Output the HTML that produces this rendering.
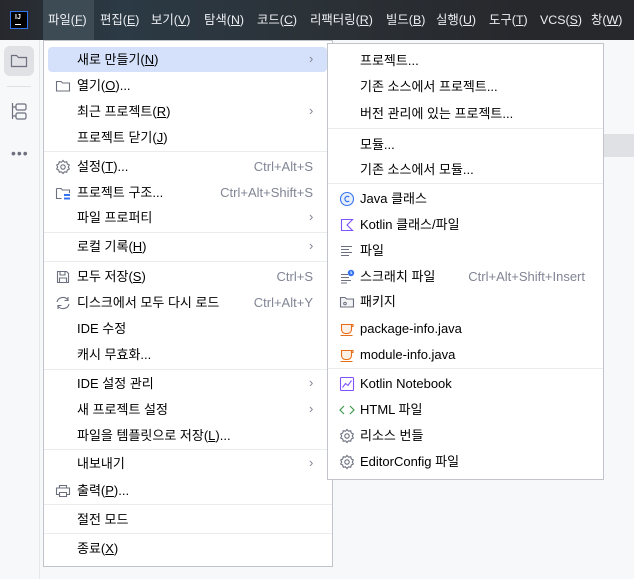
<!DOCTYPE html>
<html><head><meta charset="utf-8"><style>
*{margin:0;padding:0;box-sizing:border-box}
body{width:634px;height:579px;overflow:hidden;background:#f7f8fa;position:relative;font-family:"Liberation Sans","Noto Sans CJK KR",sans-serif;font-size:13px;color:#000}
.top{position:absolute;left:0;top:0;width:634px;height:40px;background:linear-gradient(90deg,#27282c 0,#2b3a45 120px,#2b3238 300px,#27282c 520px)}
.mb{position:absolute;top:12px;color:#eceef2;font-size:12.4px;line-height:16px;white-space:nowrap}
.mb u{text-decoration:underline}
.sel{position:absolute;left:43px;top:0;width:51px;height:40px;background:#3d4b55}
.logo{position:absolute;left:10px;top:11px;width:18px;height:18px;background:#000;border:1px solid #3574f0;color:#fff;font-size:7px;font-weight:bold;line-height:8px;padding-left:4px;padding-top:2px}
.logo i{position:absolute;left:4px;bottom:3px;width:6px;height:1px;background:#fff}
.lbar{position:absolute;left:0;top:40px;width:40px;height:539px;border-right:1px solid #e6e7ea}
.menu{position:absolute;background:#fff;border:1px solid #c2c4cc}
.it{position:absolute;white-space:nowrap;line-height:16px}
.sc{position:absolute;color:#818594;white-space:nowrap;line-height:16px;text-align:right}
.sep{position:absolute;height:1px;background:#ebecf0}
.ar{position:absolute;color:#818594;font-size:13px;line-height:16px}
svg{position:absolute}
</style></head><body>
<div class="top"></div>
<div class="sel"></div>
<div class="logo">IJ<i></i></div>
<div class="mb" style="left:48px">파일(<u>F</u>)</div>
<div class="mb" style="left:100px">편집(<u>E</u>)</div>
<div class="mb" style="left:151px">보기(<u>V</u>)</div>
<div class="mb" style="left:204px">탐색(<u>N</u>)</div>
<div class="mb" style="left:257px">코드(<u>C</u>)</div>
<div class="mb" style="left:310px">리팩터링(<u>R</u>)</div>
<div class="mb" style="left:386px">빌드(<u>B</u>)</div>
<div class="mb" style="left:436px">실행(<u>U</u>)</div>
<div class="mb" style="left:489px">도구(<u>T</u>)</div>
<div class="mb" style="left:540px">VCS(<u>S</u>)</div>
<div class="mb" style="left:591px">창(<u>W</u>)</div>

<div class="lbar"></div>
<div style="position:absolute;left:4px;top:46px;width:30px;height:30px;border-radius:6px;background:#dfe1e5"></div>
<svg style="left:9px;top:51px" width="20" height="20" viewBox="0 0 20 20"><path d="M2.5 4.5h5l2 2h8v9h-15z" fill="none" stroke="#6c707e" stroke-width="1.2"/></svg>
<div style="position:absolute;left:7px;top:86px;width:24px;height:1px;background:#dfe1e5"></div>
<svg style="left:9px;top:101px" width="20" height="20" viewBox="0 0 20 20"><path d="M3.5 2v16M3.5 6h3M3.5 15h3" stroke="#6c707e" stroke-width="1.2" fill="none"/><rect x="7" y="3" width="10" height="6" rx="1.5" fill="none" stroke="#6c707e" stroke-width="1.2"/><rect x="7" y="12" width="10" height="6" rx="1.5" fill="none" stroke="#6c707e" stroke-width="1.2"/></svg>
<div style="position:absolute;left:11px;top:150px;color:#6c707e;font-size:14px;letter-spacing:1px;line-height:6px">•••</div>
<div style="position:absolute;left:604px;top:134px;width:30px;height:23px;background:#dfe1e5"></div>

<div class="menu" style="left:43px;top:40px;width:290px;height:527px"></div>
<div style="position:absolute;left:48px;top:47px;width:279px;height:25px;border-radius:4px;background:#d5e1fb"></div>
<div class="it" style="left:77px;top:52px">새로 만들기(<u>N</u>)</div><div class="ar" style="left:309px;top:51px">›</div>
<svg style="left:55px;top:78px" width="16" height="16" viewBox="0 0 16 16"><path d="M1.5 3.5h4.5l1.5 1.5h7v8h-13z" fill="none" stroke="#6c707e" stroke-width="1.1"/></svg>
<div class="it" style="left:77px;top:78px">열기(<u>O</u>)...</div>
<div class="it" style="left:77px;top:104px">최근 프로젝트(<u>R</u>)</div><div class="ar" style="left:309px;top:103px">›</div>
<div class="it" style="left:77px;top:130px">프로젝트 닫기(<u>J</u>)</div>
<div class="sep" style="left:44px;top:151px;width:288px"></div>
<svg style="left:55px;top:159px" width="16" height="16" viewBox="0 0 16 16"><circle cx="8" cy="8" r="2.2" fill="none" stroke="#6c707e" stroke-width="1.1"/><path d="M8 1.5l1.5 1.7 2.2-.4.6 2.2 2 1-1 2 1 2-2 1-.6 2.2-2.2-.4L8 14.5l-1.5-1.7-2.2.4-.6-2.2-2-1 1-2-1-2 2-1 .6-2.2 2.2.4z" fill="none" stroke="#6c707e" stroke-width="1.1"/></svg>
<div class="it" style="left:77px;top:159px">설정(<u>T</u>)...</div><div class="sc" style="right:321px;top:159px">Ctrl+Alt+S</div>
<svg style="left:55px;top:185px" width="16" height="16" viewBox="0 0 16 16"><path d="M1.5 3.5h4.5l1.5 1.5h7v3M1.5 3.5v10h5" fill="none" stroke="#6c707e" stroke-width="1.1"/><rect x="9" y="9" width="6" height="2" fill="#3574f0"/><rect x="9" y="12.5" width="6" height="2" fill="#3574f0"/></svg>
<div class="it" style="left:77px;top:185px">프로젝트 구조...</div><div class="sc" style="right:321px;top:185px">Ctrl+Alt+Shift+S</div>
<div class="it" style="left:77px;top:210px">파일 프로퍼티</div><div class="ar" style="left:309px;top:209px">›</div>
<div class="sep" style="left:44px;top:232px;width:288px"></div>
<div class="it" style="left:77px;top:239px">로컬 기록(<u>H</u>)</div><div class="ar" style="left:309px;top:238px">›</div>
<div class="sep" style="left:44px;top:261px;width:288px"></div>
<svg style="left:55px;top:269px" width="16" height="16" viewBox="0 0 16 16"><path d="M2.5 2.5h9l2 2v9h-11z M5 2.5v3.5h5v-3.5 M4.5 13.5v-4.5h7v4.5" fill="none" stroke="#6c707e" stroke-width="1.1"/></svg>
<div class="it" style="left:77px;top:269px">모두 저장(<u>S</u>)</div><div class="sc" style="right:321px;top:269px">Ctrl+S</div>
<svg style="left:54px;top:295px" width="18" height="16" viewBox="0 0 18 16"><path d="M3 7a6 5.5 0 0 1 11-2M15 9a6 5.5 0 0 1-11 2M14 2v3.5h-3.5M4 14v-3.5h3.5" fill="none" stroke="#6c707e" stroke-width="1.1"/></svg>
<div class="it" style="left:77px;top:295px">디스크에서 모두 다시 로드</div><div class="sc" style="right:321px;top:295px">Ctrl+Alt+Y</div>
<div class="it" style="left:77px;top:321px">IDE 수정</div>
<div class="it" style="left:77px;top:347px">캐시 무효화...</div>
<div class="sep" style="left:44px;top:369px;width:288px"></div>
<div class="it" style="left:77px;top:376px">IDE 설정 관리</div><div class="ar" style="left:309px;top:375px">›</div>
<div class="it" style="left:77px;top:402px">새 프로젝트 설정</div><div class="ar" style="left:309px;top:401px">›</div>
<div class="it" style="left:77px;top:428px">파일을 템플릿으로 저장(<u>L</u>)...</div>
<div class="sep" style="left:44px;top:449px;width:288px"></div>
<div class="it" style="left:77px;top:456px">내보내기</div><div class="ar" style="left:309px;top:455px">›</div>
<svg style="left:55px;top:483px" width="16" height="16" viewBox="0 0 16 16"><path d="M4.5 5V2.5h7V5M4.5 11.5h-3v-6.5h13v6.5h-3M4.5 9.5h7v4h-7z" fill="none" stroke="#6c707e" stroke-width="1.1"/></svg>
<div class="it" style="left:77px;top:483px">출력(<u>P</u>)...</div>
<div class="sep" style="left:44px;top:504px;width:288px"></div>
<div class="it" style="left:77px;top:512px">절전 모드</div>
<div class="sep" style="left:44px;top:533px;width:288px"></div>
<div class="it" style="left:77px;top:541px">종료(<u>X</u>)</div>

<div class="menu" style="left:327px;top:43px;width:277px;height:437px"></div>
<div class="it" style="left:360px;top:53px">프로젝트...</div>
<div class="it" style="left:360px;top:79px">기존 소스에서 프로젝트...</div>
<div class="it" style="left:360px;top:106px">버전 관리에 있는 프로젝트...</div>
<div class="sep" style="left:328px;top:128px;width:275px"></div>
<div class="it" style="left:360px;top:137px">모듈...</div>
<div class="it" style="left:360px;top:162px">기존 소스에서 모듈...</div>
<div class="sep" style="left:328px;top:183px;width:275px"></div>
<svg style="left:339px;top:191px" width="16" height="16" viewBox="0 0 16 16"><circle cx="8" cy="8" r="6.5" fill="#e7effd" stroke="#3574f0" stroke-width="1.1"/><path d="M10.2 6a2.6 2.6 0 1 0 0 4" fill="none" stroke="#3574f0" stroke-width="1.2"/></svg>
<div class="it" style="left:360px;top:191px">Java 클래스</div>
<svg style="left:339px;top:217px" width="16" height="16" viewBox="0 0 16 16"><path d="M2.5 2.5h11l-5.5 5.5 5.5 5.5h-11z" fill="none" stroke="#7f52ff" stroke-width="1.1"/></svg>
<div class="it" style="left:360px;top:217px">Kotlin 클래스/파일</div>
<svg style="left:339px;top:243px" width="16" height="16" viewBox="0 0 16 16"><path d="M2 3.5h11M2 6.5h8M2 9.5h11M2 12.5h8" stroke="#6c707e" stroke-width="1.1"/></svg>
<div class="it" style="left:360px;top:243px">파일</div>
<svg style="left:339px;top:269px" width="16" height="16" viewBox="0 0 16 16"><path d="M2 5.5h7M2 8.5h8M2 11.5h10M2 14h6" stroke="#6c707e" stroke-width="1.1"/><circle cx="12" cy="4" r="3.2" fill="#3574f0"/><path d="M12 2.3v2h1.2" stroke="#fff" stroke-width=".9" fill="none"/></svg>
<div class="it" style="left:360px;top:269px">스크래치 파일</div><div class="sc" style="right:49px;top:269px">Ctrl+Alt+Shift+Insert</div>
<svg style="left:339px;top:294px" width="16" height="16" viewBox="0 0 16 16"><path d="M1.5 3.5h4.5l1.5 1.5h7v8h-13z" fill="#f2f3f5" stroke="#6c707e" stroke-width="1.1"/><circle cx="6" cy="9.5" r="1.3" fill="none" stroke="#6c707e" stroke-width="1"/></svg>
<div class="it" style="left:360px;top:294px">패키지</div>
<svg style="left:339px;top:321px" width="16" height="16" viewBox="0 0 16 16"><path d="M2.5 3.5h10v5a4 4 0 0 1-4 4h-2a4 4 0 0 1-4-4z" fill="#fdf0e6" stroke="#e66d17" stroke-width="1.1"/><path d="M12.5 3.5h1.5v2h-1.5M1.5 14.5h12" stroke="#e66d17" stroke-width="1.1" fill="none"/></svg>
<div class="it" style="left:360px;top:321px">package-info.java</div>
<svg style="left:339px;top:347px" width="16" height="16" viewBox="0 0 16 16"><path d="M2.5 3.5h10v5a4 4 0 0 1-4 4h-2a4 4 0 0 1-4-4z" fill="#fdf0e6" stroke="#e66d17" stroke-width="1.1"/><path d="M12.5 3.5h1.5v2h-1.5M1.5 14.5h12" stroke="#e66d17" stroke-width="1.1" fill="none"/></svg>
<div class="it" style="left:360px;top:347px">module-info.java</div>
<div class="sep" style="left:328px;top:368px;width:275px"></div>
<svg style="left:339px;top:376px" width="16" height="16" viewBox="0 0 16 16"><rect x="1.5" y="1.5" width="13" height="13" rx="1" fill="none" stroke="#7f52ff" stroke-width="1.1"/><path d="M3.5 11.5l3-4 2.5 2 3.5-5" fill="none" stroke="#7f52ff" stroke-width="1.1"/></svg>
<div class="it" style="left:360px;top:376px">Kotlin Notebook</div>
<svg style="left:339px;top:402px" width="16" height="16" viewBox="0 0 16 16"><path d="M5 4l-4 4 4 4M11 4l4 4-4 4" fill="none" stroke="#3e9b4f" stroke-width="1.2"/></svg>
<div class="it" style="left:360px;top:402px">HTML 파일</div>
<svg style="left:339px;top:428px" width="16" height="16" viewBox="0 0 16 16"><circle cx="8" cy="8" r="2.2" fill="none" stroke="#6c707e" stroke-width="1.1"/><path d="M8 1.5l1.5 1.7 2.2-.4.6 2.2 2 1-1 2 1 2-2 1-.6 2.2-2.2-.4L8 14.5l-1.5-1.7-2.2.4-.6-2.2-2-1 1-2-1-2 2-1 .6-2.2 2.2.4z" fill="none" stroke="#6c707e" stroke-width="1.1"/></svg>
<div class="it" style="left:360px;top:428px">리소스 번들</div>
<svg style="left:339px;top:454px" width="16" height="16" viewBox="0 0 16 16"><circle cx="8" cy="8" r="2.2" fill="none" stroke="#6c707e" stroke-width="1.1"/><path d="M8 1.5l1.5 1.7 2.2-.4.6 2.2 2 1-1 2 1 2-2 1-.6 2.2-2.2-.4L8 14.5l-1.5-1.7-2.2.4-.6-2.2-2-1 1-2-1-2 2-1 .6-2.2 2.2.4z" fill="none" stroke="#6c707e" stroke-width="1.1"/></svg>
<div class="it" style="left:360px;top:454px">EditorConfig 파일</div>
</body></html>
